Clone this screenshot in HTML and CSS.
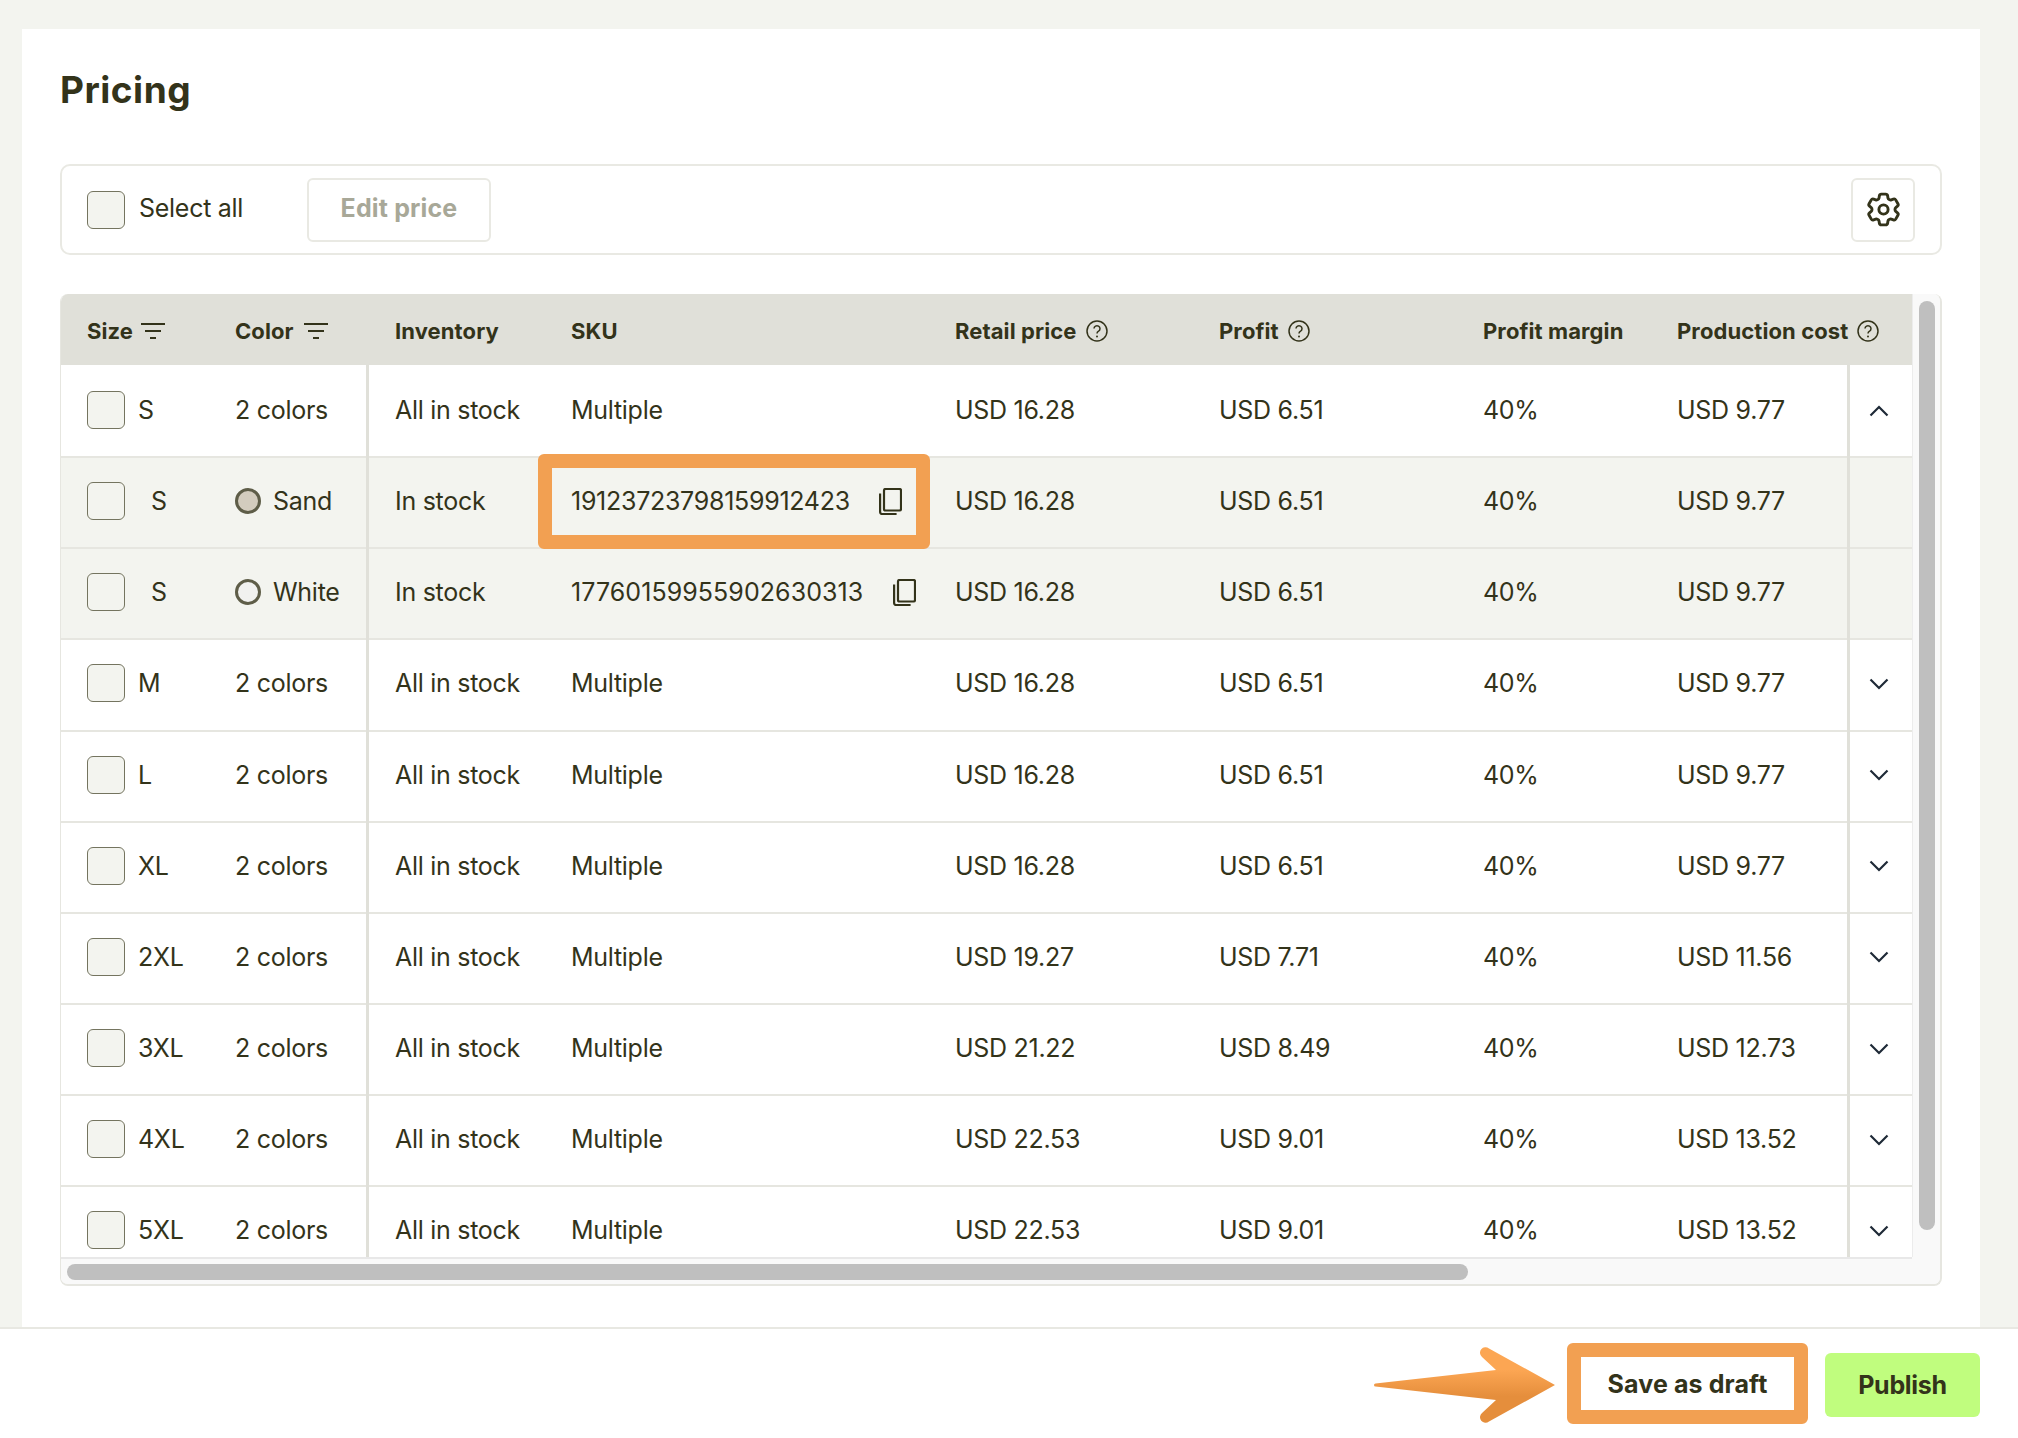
FILE: index.html
```html
<!DOCTYPE html>
<html lang="en">
<head>
<meta charset="utf-8">
<title>Pricing</title>
<link rel="stylesheet" href="styles.css">
</head>
<body>
<svg class="defs" width="0" height="0" aria-hidden="true">
  <symbol id="i-filter" viewBox="0 0 24 16"><path d="M0 1h24M4 8h16M9 15h6" fill="none" stroke="currentColor" stroke-width="2"/></symbol>
  <symbol id="i-help" viewBox="0 0 22 22"><circle cx="11" cy="11" r="10" fill="none" stroke="currentColor" stroke-width="1.5"/><path d="M8 8.6a3 3 0 1 1 4.6 2.6c-1 .6-1.6 1.2-1.6 2.4" fill="none" stroke="currentColor" stroke-width="1.5"/><circle cx="11" cy="16.4" r="1" fill="currentColor"/></symbol>
  <symbol id="i-copy" viewBox="0 0 23 27"><rect x="5" y="1" width="17" height="21.5" rx="1.5" fill="none" stroke="currentColor" stroke-width="2.2"/><path d="M1.1 5.500v18.500a2 2 0 0 0 2 2h14.500" fill="none" stroke="currentColor" stroke-width="2.2"/></symbol>
  <symbol id="i-down" viewBox="0 0 20 12"><path d="M1.5 1.5 10 10l8.500-8.500" fill="none" stroke="currentColor" stroke-width="2.200"/></symbol>
  <symbol id="i-up" viewBox="0 0 20 12"><path d="M1.500 10.500 10 2l8.500 8.500" fill="none" stroke="currentColor" stroke-width="2.200"/></symbol>
</svg>
<main class="panel">
  <h1 class="title">Pricing</h1>
  <div class="toolbar">
    <label class="select-all"><span class="check"></span><span class="select-text">Select all</span></label>
    <button class="btn-edit">Edit price</button>
    <button class="btn-gear" aria-label="Settings">
      <svg width="41" height="41" viewBox="0 0 24 24" fill="none" stroke="currentColor" stroke-width="1.700"><path d="M9.594 3.94c.09-.542.56-.94 1.110-.94h2.593c.55 0 1.020.398 1.110.94l.213 1.281c.063.374.313.686.645.87.074.04.147.083.22.127.325.196.72.257 1.075.124l1.217-.456a1.125 1.125 0 0 1 1.370.490l1.296 2.247a1.125 1.125 0 0 1-.26 1.431l-1.003.827c-.293.241-.438.613-.43.992a7.723 7.723 0 0 1 0 .255c-.008.378.137.75.43.991l1.004.827c.424.35.534.955.26 1.430l-1.298 2.247a1.125 1.125 0 0 1-1.369.491l-1.217-.456c-.355-.133-.75-.072-1.076.124a6.470 6.470 0 0 1-.22.128c-.331.183-.581.495-.644.869l-.213 1.281c-.09.543-.56.94-1.110.94h-2.594c-.55 0-1.019-.398-1.110-.94l-.213-1.281c-.062-.374-.312-.686-.644-.87a6.520 6.520 0 0 1-.22-.127c-.325-.196-.72-.257-1.076-.124l-1.217.456a1.125 1.125 0 0 1-1.369-.49l-1.297-2.247a1.125 1.125 0 0 1 .26-1.431l1.004-.827c.292-.24.437-.613.43-.991a6.932 6.932 0 0 1 0-.255c.007-.38-.138-.751-.43-.992l-1.004-.827a1.125 1.125 0 0 1-.26-1.430l1.297-2.247a1.125 1.125 0 0 1 1.370-.491l1.216.456c.356.133.751.072 1.076-.124.072-.044.146-.086.22-.128.332-.183.582-.495.644-.869l.214-1.280Z"/><circle cx="12" cy="12" r="2.700"/></svg>
    </button>
  </div>
  <div class="table-wrap">
    <div class="table">
      <div class="row head">
        <div class="cell">Size<svg class="ic-filter"><use href="#i-filter"/></svg></div>
        <div class="cell">Color<svg class="ic-filter"><use href="#i-filter"/></svg></div>
        <div class="cell pad">Inventory</div>
        <div class="cell">SKU</div>
        <div class="cell">Retail price<svg class="ic-help"><use href="#i-help"/></svg></div>
        <div class="cell">Profit<svg class="ic-help"><use href="#i-help"/></svg></div>
        <div class="cell">Profit margin</div>
        <div class="cell">Production cost<svg class="ic-help"><use href="#i-help"/></svg></div>
      </div>
      <div class="row">
        <div class="cell"><span class="check"></span><span>S</span></div><div class="cell div">2 colors</div><div class="cell pad">All in stock</div><div class="cell">Multiple</div><div class="cell">USD 16.28</div><div class="cell">USD 6.51</div><div class="cell">40%</div><div class="cell">USD 9.77</div><div class="cell act"><svg class="ic-chev"><use href="#i-up"/></svg></div>
      </div>
      <div class="row sub">
        <div class="cell"><span class="check"></span><span class="sub-size">S</span></div><div class="cell div"><span class="dot sand"></span>Sand</div><div class="cell pad">In stock</div><div class="cell sku"><span class="mark"></span><span>19123723798159912423</span><svg class="ic-copy"><use href="#i-copy"/></svg></div><div class="cell">USD 16.28</div><div class="cell">USD 6.51</div><div class="cell">40%</div><div class="cell">USD 9.77</div><div class="cell act"></div>
      </div>
      <div class="row sub">
        <div class="cell"><span class="check"></span><span class="sub-size">S</span></div><div class="cell div"><span class="dot"></span>White</div><div class="cell pad">In stock</div><div class="cell sku"><span class="sku-wide">17760159955902630313</span><svg class="ic-copy"><use href="#i-copy"/></svg></div><div class="cell">USD 16.28</div><div class="cell">USD 6.51</div><div class="cell">40%</div><div class="cell">USD 9.77</div><div class="cell act"></div>
      </div>
      <div class="row"><div class="cell"><span class="check"></span><span>M</span></div><div class="cell div">2 colors</div><div class="cell pad">All in stock</div><div class="cell">Multiple</div><div class="cell">USD 16.28</div><div class="cell">USD 6.51</div><div class="cell">40%</div><div class="cell">USD 9.77</div><div class="cell act"><svg class="ic-chev"><use href="#i-down"/></svg></div></div>
      <div class="row"><div class="cell"><span class="check"></span><span>L</span></div><div class="cell div">2 colors</div><div class="cell pad">All in stock</div><div class="cell">Multiple</div><div class="cell">USD 16.28</div><div class="cell">USD 6.51</div><div class="cell">40%</div><div class="cell">USD 9.77</div><div class="cell act"><svg class="ic-chev"><use href="#i-down"/></svg></div></div>
      <div class="row"><div class="cell"><span class="check"></span><span>XL</span></div><div class="cell div">2 colors</div><div class="cell pad">All in stock</div><div class="cell">Multiple</div><div class="cell">USD 16.28</div><div class="cell">USD 6.51</div><div class="cell">40%</div><div class="cell">USD 9.77</div><div class="cell act"><svg class="ic-chev"><use href="#i-down"/></svg></div></div>
      <div class="row"><div class="cell"><span class="check"></span><span>2XL</span></div><div class="cell div">2 colors</div><div class="cell pad">All in stock</div><div class="cell">Multiple</div><div class="cell">USD 19.27</div><div class="cell">USD 7.71</div><div class="cell">40%</div><div class="cell">USD 11.56</div><div class="cell act"><svg class="ic-chev"><use href="#i-down"/></svg></div></div>
      <div class="row"><div class="cell"><span class="check"></span><span>3XL</span></div><div class="cell div">2 colors</div><div class="cell pad">All in stock</div><div class="cell">Multiple</div><div class="cell">USD 21.22</div><div class="cell">USD 8.49</div><div class="cell">40%</div><div class="cell">USD 12.73</div><div class="cell act"><svg class="ic-chev"><use href="#i-down"/></svg></div></div>
      <div class="row"><div class="cell"><span class="check"></span><span>4XL</span></div><div class="cell div">2 colors</div><div class="cell pad">All in stock</div><div class="cell">Multiple</div><div class="cell">USD 22.53</div><div class="cell">USD 9.01</div><div class="cell">40%</div><div class="cell">USD 13.52</div><div class="cell act"><svg class="ic-chev"><use href="#i-down"/></svg></div></div>
      <div class="row"><div class="cell"><span class="check"></span><span>5XL</span></div><div class="cell div">2 colors</div><div class="cell pad">All in stock</div><div class="cell">Multiple</div><div class="cell">USD 22.53</div><div class="cell">USD 9.01</div><div class="cell">40%</div><div class="cell">USD 13.52</div><div class="cell act"><svg class="ic-chev"><use href="#i-down"/></svg></div></div>
    </div>
    <div class="vtrack"><div class="vthumb"></div></div>
    <div class="htrack"><div class="hthumb"></div></div>
    <div class="corner"></div>
  </div>
</main>
<footer class="footer">
  <svg class="arrow" width="182" height="76" viewBox="0 0 182 76">
    <defs><linearGradient id="arrow-fill" x1="0" y1="0" x2="0" y2="1"><stop offset="0.3" stop-color="#fca653"/><stop offset="0.65" stop-color="#e58e3c"/></linearGradient></defs>
    <path d="M1.500 36.500 122 23 108 10a5.500 5.500 0 0 1 7-8.500L181 38l-66 36.500a5.500 5.500 0 0 1-7-8.500l14-13L1.500 39.500a1.500 1.500 0 0 1 0-3Z" fill="url(#arrow-fill)"/>
  </svg>
  <button class="btn-draft">Save as draft</button>
  <button class="btn-publish">Publish</button>
</footer>
</body>
</html>
```
FILE: styles.css
```css
* { box-sizing: border-box; }
html, body { margin: 0; height: 100%; }
body {
  width: 2018px;
  height: 1438px;
  overflow: hidden;
  background: #f3f4ef;
  color: #33331a;
  font-family: Inter, Roboto, sans-serif;
  font-size: 25px;
  letter-spacing: -0.28px;
  display: flex;
  flex-direction: column;
}
.defs { position: absolute; }
button { font-family: inherit; cursor: pointer; }

.panel {
  flex: 1;
  margin: 29px 38px 0 22px;
  padding: 39px 38px 0;
  background: #fff;
  min-height: 0;
}
.title {
  margin: 0 0 52px;
  font-size: 37px;
  line-height: 44px;
  font-weight: 700;
  letter-spacing: 0.5px;
}
.toolbar {
  height: 91px;
  display: flex;
  align-items: center;
  padding: 0 25px;
  border: 2px solid #e9e9e3;
  border-radius: 10px;
}
.select-all { width: 220px; display: flex; align-items: center; gap: 14px; }
.select-text { padding-bottom: 3px; }
.check {
  flex: none;
  width: 38px;
  height: 38px;
  background: #f3f4ef;
  border: 1.500px solid #74745f;
  border-radius: 6px;
}
.btn-edit {
  width: 184px;
  height: 64px;
  padding: 0 0 3px;
  background: #fff;
  color: #a8a898;
  border: 2px solid #e9e9e3;
  border-radius: 6px;
  font-size: 25px;
  font-weight: 700;
  letter-spacing: 0.15px;
}
.btn-gear {
  margin-left: auto;
  width: 64px;
  height: 64px;
  padding: 0;
  display: flex;
  align-items: center;
  justify-content: center;
  background: #fff;
  color: #33331a;
  border: 2px solid #e9e9e3;
  border-radius: 6px;
}

.table-wrap {
  margin-top: 39px;
  height: 992px;
  display: grid;
  grid-template-columns: 1851px 28px;
  grid-template-rows: 963px 27px;
  border-left: 1px solid #e6e6e0;
  border-right: 2px solid #e6e6e0;
  border-bottom: 2px solid #e6e6e0;
  border-radius: 8px;
  overflow: hidden;
  background: #f9f9f9;
}
.table { overflow: hidden; background: #fff; }
.row {
  height: 91.150px;
  display: grid;
  grid-template-columns: 148px 134px 202px 384px 264px 264px 194px 170px 65px;
  padding-left: 26px;
  border-top: 2px solid #e6e6e0;
  background: #fff;
}
.row.sub { background: #f3f4ef; }
.row.head {
  height: 71px;
  background: #e0e0d9;
  border-top: 0;
  font-size: 22px;
  font-weight: 700;
  letter-spacing: 0.1px;
}
.head + .row { border-top-color: #fff; }
.cell { display: flex; align-items: center; white-space: nowrap; min-width: 0; padding-bottom: 3px; }
.head .cell { padding: 2px 0 0; }
.head .cell.pad { padding-left: 26px; }
.cell.pad { padding-left: 26px; }
.cell.div { border-right: 3px solid #e0e0d9; margin-top: -2px; padding-top: 2px; }
.cell.act {
  justify-content: center;
  padding-right: 4px;
  border-left: 3px solid #e0e0d9;
  margin-top: -2px;
  color: #1f2a37;
}
.ic-chev { margin-top: 3px; width: 20px; height: 12px; }
.cell .check + span { margin-left: 13px; }
.cell .check + .sub-size { margin-left: 26px; }
.sku { position: relative; }
.sku-wide { letter-spacing: 0.07px; }
.mark {
  position: absolute;
  left: -33px;
  top: -4px;
  width: 392px;
  height: 95px;
  border: 14px solid #f2a052;
  border-radius: 6px;
}
.ic-filter { flex: none; width: 24px; height: 16px; margin-left: 8px; }
.head .cell:nth-child(2) .ic-filter { margin-left: 10px; }
.ic-help { flex: none; width: 22px; height: 22px; margin-left: 9px; }
.ic-copy { flex: none; width: 23px; height: 27px; margin-left: 29.500px; }
.dot {
  flex: none;
  width: 26px;
  height: 26px;
  margin-right: 12px;
  border: 3px solid #5e5d48;
  border-radius: 50%;
  background: #f1f1ef;
}
.dot.sand { background: #d3ccbe; }

.vtrack { grid-column: 2; grid-row: 1; padding: 7px 6px 0; background: #f9f9f9; border-left: 1px solid #ececec; }
.vthumb { width: 16px; height: 929px; background: #bfbfbf; border-radius: 8px; }
.htrack { grid-column: 1; grid-row: 2; padding: 5px 0 0 6px; background: #f9f9f9; border-top: 2px solid #e8e8e8; }
.hthumb { width: 1401px; height: 16px; background: #bfbfbf; border-radius: 8px; }
.corner { background: #f9f9f9; }

.footer {
  flex: none;
  height: 111px;
  display: flex;
  align-items: center;
  justify-content: flex-end;
  padding: 3px 38px 0 0;
  background: #fff;
  border-top: 2px solid #e8e8e2;
}
.arrow { margin-right: 11px; }
.btn-draft {
  width: 241px;
  height: 81px;
  margin: 0 17px 3px 0;
  padding: 0;
  background: #fff;
  color: #33331a;
  border: 14px solid #f2a052;
  border-radius: 6px;
  font-size: 25px;
  font-weight: 700;
  letter-spacing: 0.1px;
}
.btn-publish {
  width: 155px;
  height: 64px;
  padding: 0;
  background: #c0fd7e;
  color: #33331a;
  border: 0;
  border-radius: 6px;
  font-size: 25px;
  font-weight: 700;
  letter-spacing: -0.3px;
}
```
